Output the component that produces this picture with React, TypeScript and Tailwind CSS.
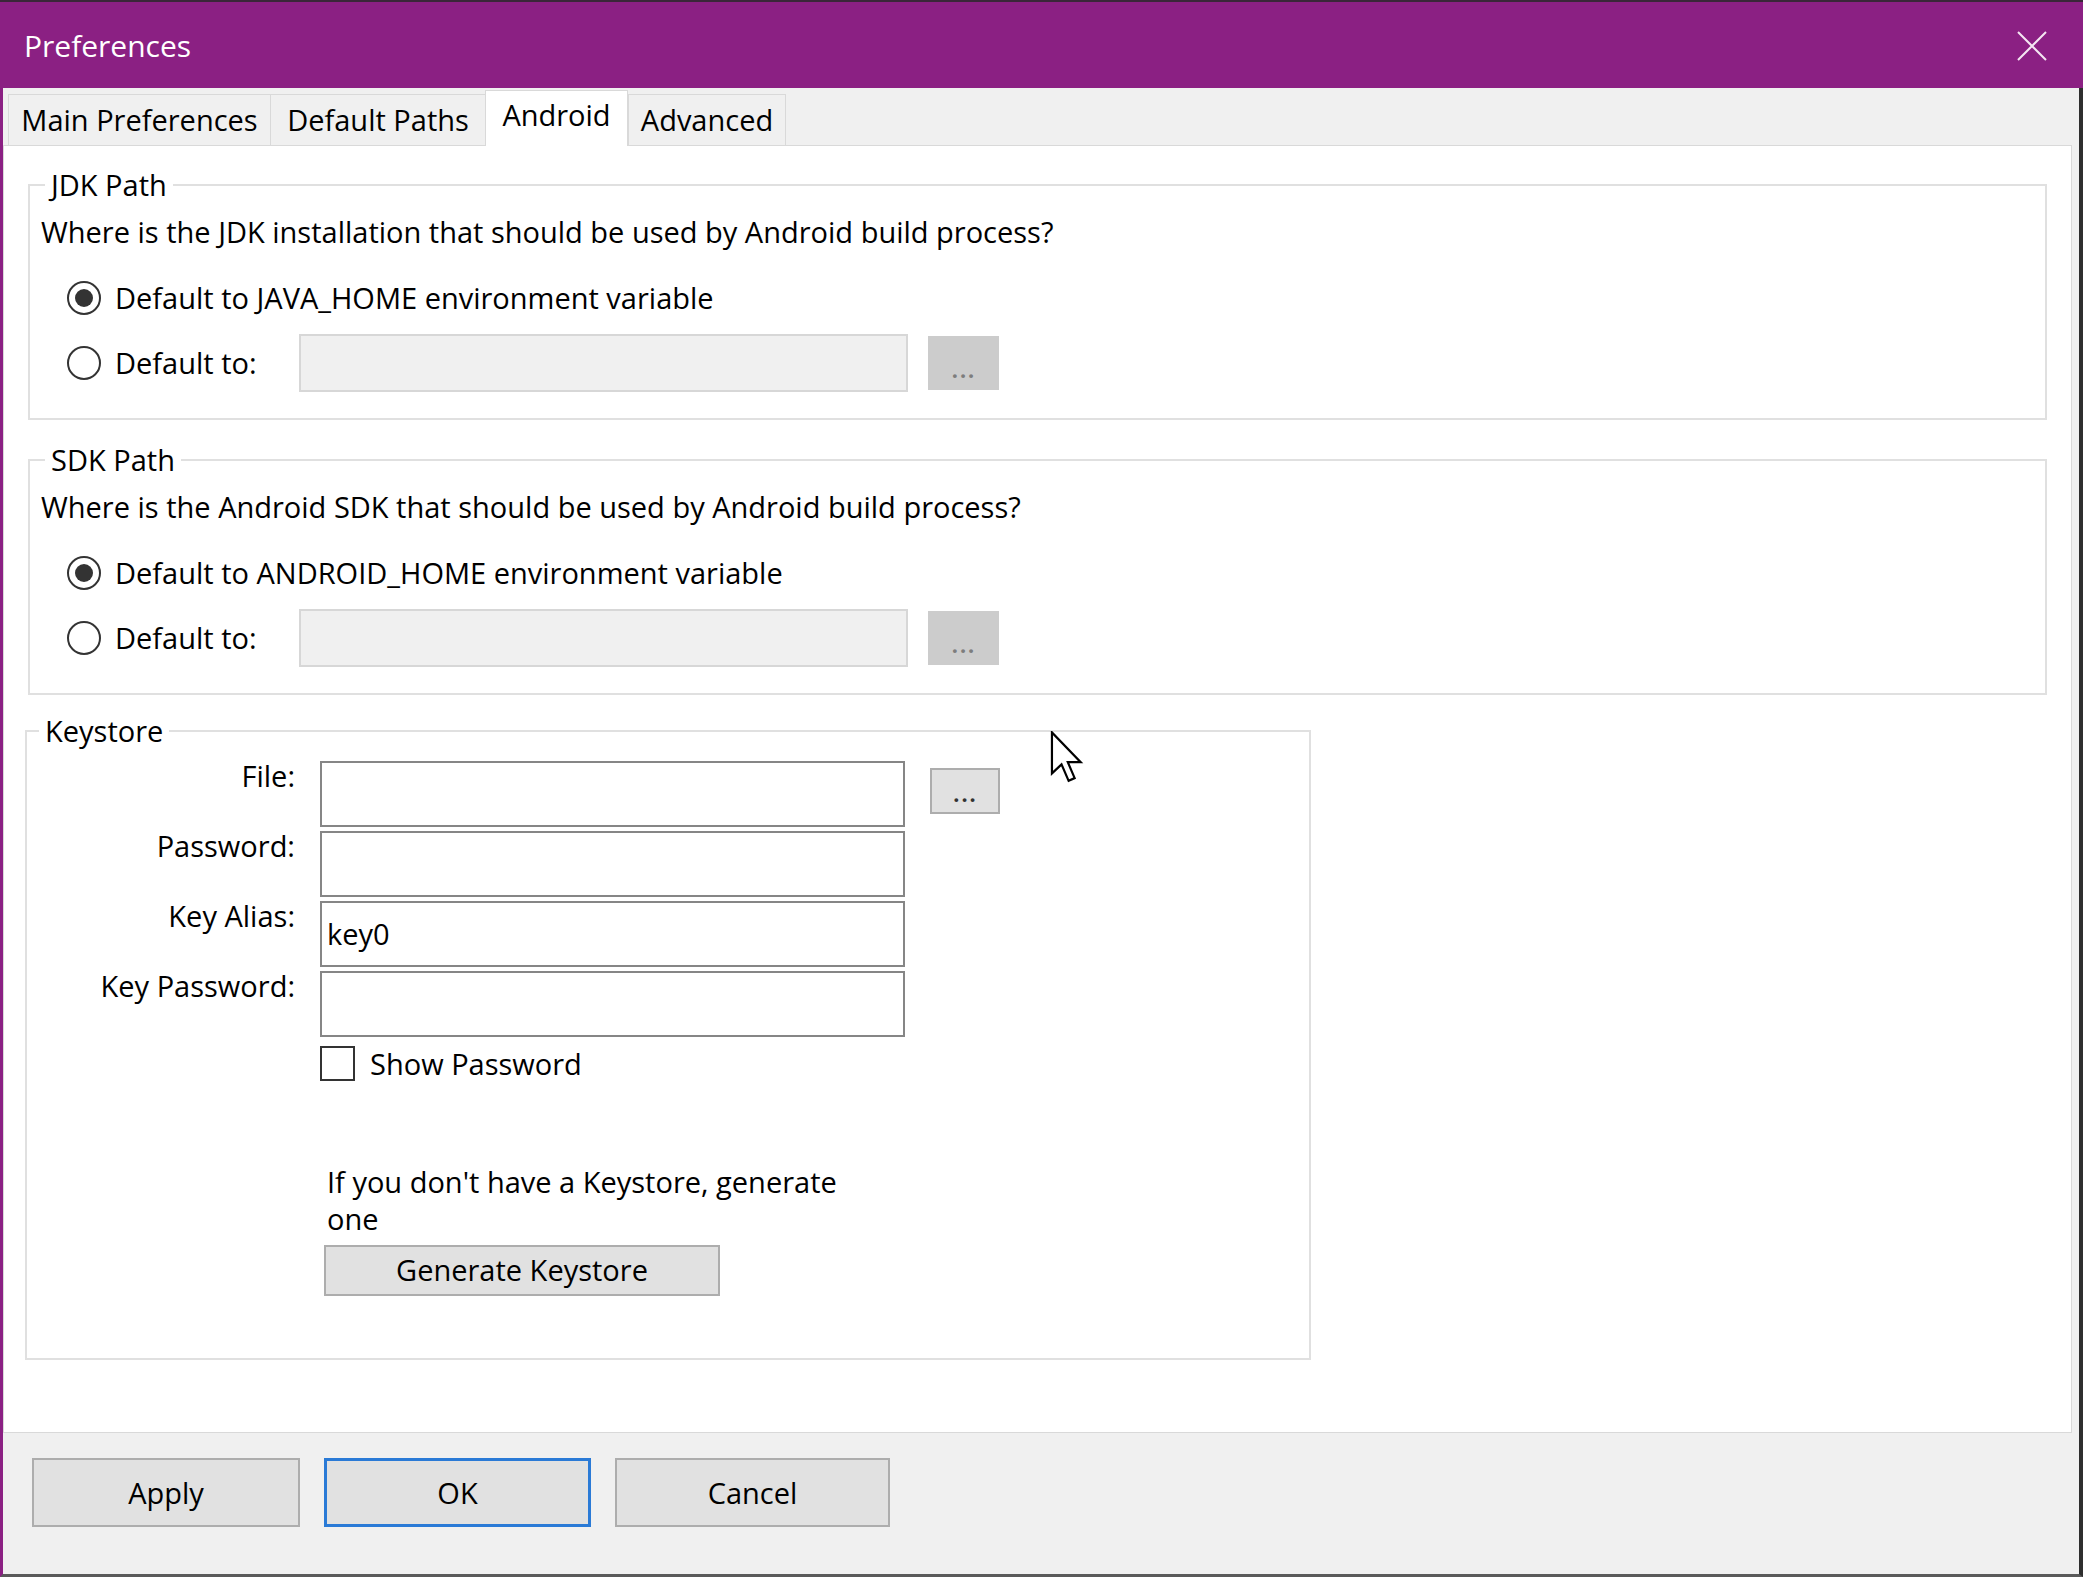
import React from "react"

const TABS = ["Main Preferences", "Default Paths", "Android", "Advanced"]

const FONT = "font-['Open_Sans','Noto_Sans',sans-serif]"

function Radio({ checked }: { checked?: boolean }) {
  return (
    <span className="flex h-[34px] w-[34px] shrink-0 items-center justify-center rounded-full border-2 border-[#333] bg-white">
      {checked && <span className="h-[18px] w-[18px] rounded-full bg-[#333]" />}
    </span>
  )
}

function DotsButton({ disabled }: { disabled?: boolean }) {
  return (
    <button
      className={
        disabled
          ? "flex h-[54px] w-[71px] items-end justify-center border border-[#cccccc] bg-[#cccccc] pb-[8px] text-[26px] font-semibold leading-none tracking-[1px] text-[#7d7d7d]"
          : "flex h-[46px] w-[70px] items-end justify-center border-2 border-[#adadad] bg-[#e1e1e1] pb-[7px] text-[26px] font-semibold leading-none tracking-[1px] text-[#333]"
      }
    >
      ...
    </button>
  )
}

function PathGroup({ title, question, envVar }: { title: string; question: string; envVar: string }) {
  return (
    <fieldset className="mx-[24px] border-2 border-[#e0e0e0] pb-[26px] pl-[11px]">
      <legend className="ml-[4px] px-[6px] leading-[37px]">{title}</legend>
      <div className="pt-[10px] leading-[37px]">{question}</div>
      <div className="mt-[28px] flex h-[40px] items-center gap-[14px] pl-[26px]">
        <Radio checked />
        <span>Default to {envVar} environment variable</span>
      </div>
      <div className="mt-[16px] flex h-[58px] items-center pl-[26px]">
        <Radio />
        <span className="ml-[14px] w-[184px]">Default to:</span>
        <div className="h-[58px] w-[609px] border-2 border-[#d7d7d7] bg-[#f0f0f0]" />
        <div className="ml-[20px]">
          <DotsButton disabled />
        </div>
      </div>
    </fieldset>
  )
}

function Field({ label, value }: { label: string; value?: string }) {
  return (
    <div className="flex items-start">
      <div className="w-[268px] pt-[1px] text-right leading-[28px]">{label}</div>
      <div className="ml-[25px] flex h-[66px] w-[585px] items-center border-2 border-[#868686] bg-white px-[5px]">
        {value}
      </div>
    </div>
  )
}

export default function App() {
  return (
    <div className={`relative flex h-[1577px] w-[2083px] flex-col bg-[#f0f0f0] text-[29px] text-black ${FONT}`}>
      {/* title bar */}
      <div className="flex h-[88px] shrink-0 items-center justify-between border-t-2 border-[#3a2638] bg-[#8b2083] pl-[24px] pr-[36px]">
        <span className="text-[30px] text-white">Preferences</span>
        <svg width="30" height="30" viewBox="0 0 30 30" className="mt-[2px]">
          <path d="M1 1 L29 29 M29 1 L1 29" stroke="#f4e6f2" strokeWidth="2" fill="none" />
        </svg>
      </div>

      <div className="flex flex-1 flex-col border-b-[3px] border-l-[3px] border-r-[4px] border-b-[#5a5a5a] border-l-[#8b2083] border-r-[#2e2e2e]">
        {/* tabs */}
        <div className="flex h-[57px] items-end pl-[5px]">
          {TABS.map((t) =>
            t === "Android" ? (
              <div
                key={t}
                className="relative z-10 -mb-px flex h-[56px] w-[143px] items-start justify-center border-x border-t border-[#d9d9d9] bg-white pt-[6px] leading-[36px]"
              >
                {t}
              </div>
            ) : (
              <div
                key={t}
                className={`flex h-[51px] items-center justify-center border-l border-t border-[#d9d9d9] bg-[#f0f0f0] leading-[36px] ${
                  t === "Main Preferences" ? "w-[262px]" : t === "Default Paths" ? "w-[215px]" : "w-[158px] border-r"
                }`}
              >
                {t}
              </div>
            )
          )}
        </div>

        {/* page */}
        <div className="mr-[7px] flex h-[1288px] flex-col border border-[#d9d9d9] bg-white pt-[20px]">
          <PathGroup
            title="JDK Path"
            question="Where is the JDK installation that should be used by Android build process?"
            envVar="JAVA_HOME"
          />
          <div className="mt-[21px]">
            <PathGroup
              title="SDK Path"
              question="Where is the Android SDK that should be used by Android build process?"
              envVar="ANDROID_HOME"
            />
          </div>

          <fieldset className="ml-[21px] mt-[17px] w-[1286px] border-2 border-[#e0e0e0] pb-[62px]">
            <legend className="ml-[12px] px-[6px] leading-[37px]">Keystore</legend>
            <div className="flex pt-[12px]">
              <div className="flex flex-col gap-[4px]">
                <Field label="File:" />
                <Field label="Password:" />
                <Field label="Key Alias:" value="key0" />
                <Field label="Key Password:" />
              </div>
              <div className="ml-[25px] mt-[7px]">
                <DotsButton />
              </div>
            </div>
            <div className="ml-[293px] mt-[5px] flex items-center gap-[15px]">
              <span className="h-[35px] w-[35px] border-2 border-[#333] bg-white" />
              <span>Show Password</span>
            </div>
            <div className="ml-[300px] mt-[77px] leading-[37px]">
              If you don&apos;t have a Keystore, generate
              <br />
              one
            </div>
            <button className="ml-[297px] mt-[8px] h-[51px] w-[396px] border-2 border-[#adadad] bg-[#e1e1e1] leading-[36px]">
              Generate Keystore
            </button>
          </fieldset>
        </div>

        {/* footer buttons */}
        <div className="flex gap-[24px] pl-[29px] pt-[25px]">
          <button className="h-[69px] w-[268px] border-2 border-[#adadad] bg-[#e1e1e1]">Apply</button>
          <button className="h-[69px] w-[267px] border-[3px] border-[#2a7ad6] bg-[#e1e1e1]">OK</button>
          <button className="h-[69px] w-[275px] border-2 border-[#adadad] bg-[#e1e1e1]">Cancel</button>
        </div>
      </div>

      {/* mouse pointer */}
      <svg className="absolute left-[1049px] top-[731px]" width="36" height="52" viewBox="0 0 12 19">
        <path
          d="M0.5 0.5 L0.5 15.5 L4 12.2 L6.6 18.2 L8.8 17.2 L6.3 11.4 L11 11.4 Z"
          fill="#fff"
          stroke="#000"
          strokeWidth="0.8"
          strokeLinejoin="miter"
        />
      </svg>
    </div>
  )
}
